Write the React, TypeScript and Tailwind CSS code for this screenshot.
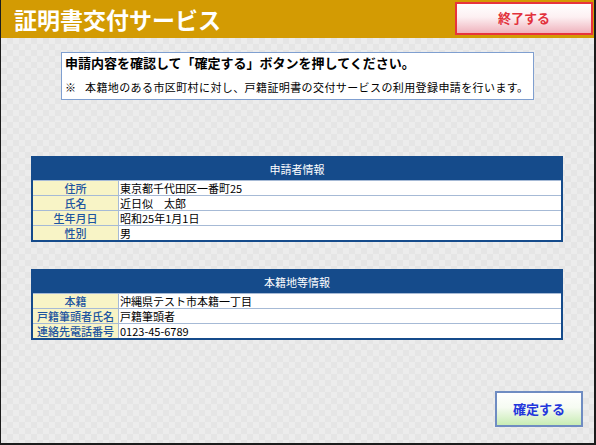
import React from "react";

const font = { fontFamily: '"Noto Sans CJK JP", "Noto Sans", sans-serif' };

type Row = [string, string];

function InfoTable({ title, rows }: { title: string; rows: Row[] }) {
  return (
    <div className="w-[532px] border-2 border-[#154b8b] bg-[#154b8b]">
      <div className="h-[22px] flex items-center justify-center text-white text-[11px] leading-none">
        {title}
      </div>
      <div className="bg-white">
        {rows.map(([k, v]) => (
          <div key={k} className="flex h-[15px] border-t border-[#a6bad6]">
            <div className="w-[86px] bg-[#f8f4c6] text-[#1d55a0] text-[11px] font-medium leading-[14px] text-center border-r border-[#a6bad6]">
              {k}
            </div>
            <div className="flex-1 pl-[1px] text-black text-[11px] leading-[14px]">{v}</div>
          </div>
        ))}
      </div>
    </div>
  );
}

export default function App() {
  return (
    <div
      className="w-[596px] h-[445px] flex flex-col border-l border-r-2 border-b-2 border-[#1c1c1c] overflow-hidden"
      style={font}
    >
      <div className="h-[38px] shrink-0 bg-[#d39b03] flex items-center justify-between pl-[13px] pr-[1px]">
        <div className="text-white font-bold text-[23px] leading-none tracking-[0px]">証明書交付サービス</div>
        <div className="w-[138px] h-[33px] mt-[-2px] border-2 border-[#e8343c] bg-[linear-gradient(to_bottom,#ffffff_0%,#fdf0f2_45%,#efb3bd_100%)] flex items-center justify-center text-[#e2323c] font-bold text-[13px]">
          終了する
        </div>
      </div>
      <div className="flex-1 flex flex-col bg-[repeating-conic-gradient(#e5e5e5_0%_25%,#ececec_0%_50%)] bg-[length:12px_12px]">
        <div className="ml-[60px] mt-[14px] w-[473px] h-[48px] bg-white border border-[#7f9fd0] pl-[3px] pt-[1px]">
          <div className="text-[13px] font-bold text-black leading-[18px]">
            申請内容を確認して「確定する」ボタンを押してください。
          </div>
          <div className="mt-[8px] text-[11px] text-black leading-[14px] tracking-[0.4px]">
            ※&nbsp;&nbsp;&nbsp;本籍地のある市区町村に対し、戸籍証明書の交付サービスの利用登録申請を行います。
          </div>
        </div>
        <div className="ml-[30px] mt-[56px]">
          <InfoTable
            title="申請者情報"
            rows={[
              ["住所", "東京都千代田区一番町25"],
              ["氏名", "近日似　太郎"],
              ["生年月日", "昭和25年1月1日"],
              ["性別", "男"],
            ]}
          />
        </div>
        <div className="ml-[30px] mt-[27px]">
          <InfoTable
            title="本籍地等情報"
            rows={[
              ["本籍", "沖縄県テスト市本籍一丁目"],
              ["戸籍筆頭者氏名", "戸籍筆頭者"],
              ["連絡先電話番号", "0123-45-6789"],
            ]}
          />
        </div>
        <div className="ml-[494px] mt-[51px] w-[88px] h-[36px] border-2 border-[#6f8cc2] bg-[linear-gradient(to_bottom,#ffffff_0%,#f6fbf2_45%,#c8ecb4_100%)] flex items-center justify-center text-[#2336dc] font-bold text-[13px]">
          確定する
        </div>
      </div>
    </div>
  );
}
